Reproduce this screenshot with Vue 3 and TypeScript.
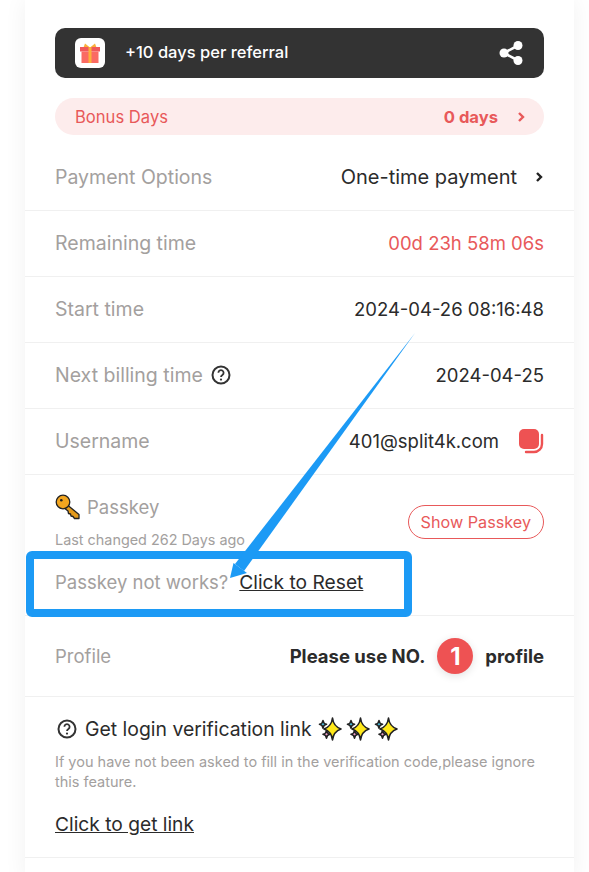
<template>
  <div class="page">
    <div class="card">
      <div class="referral">
        <span class="gift-box">
          <svg width="22" height="22" viewBox="0 0 22 22">
            <path d="M6 1.500 11 5.500 16 1.500 17.500 5.500H4.500Z" fill="#fbb03b" />
            <rect x="1" y="5" width="20" height="4.500" fill="#f0585a" />
            <rect x="2.500" y="9.500" width="17" height="11.500" fill="#fa6a63" />
            <rect x="9.500" y="5" width="3" height="16" fill="#fbb03b" />
          </svg>
        </span>
        <span class="referral-text">+10 days per referral</span>
        <svg class="share" width="26" height="26" viewBox="0 0 26 26" fill="#fff">
          <circle cx="20" cy="5.500" r="4.500" />
          <circle cx="6" cy="13" r="4.500" />
          <circle cx="20" cy="20.500" r="4.500" />
          <path d="M6 13 20 5.500M6 13l14 7.500" stroke="#fff" stroke-width="2.600" />
        </svg>
      </div>

      <div class="bonus">
        <span>Bonus Days</span>
        <span class="bonus-value">
          <b>0 days</b>
          <svg width="9" height="12" viewBox="0 0 9 12" fill="none" stroke="#e8595a" stroke-width="2.400">
            <path d="M2 2l4 4-4 4" />
          </svg>
        </span>
      </div>

      <div class="row row-first">
        <span class="label">Payment Options</span>
        <span class="value with-chevron">
          One-time payment
          <svg width="9" height="12" viewBox="0 0 9 12" fill="none" stroke="#222" stroke-width="2.400">
            <path d="M2 2l4 4-4 4" />
          </svg>
        </span>
      </div>
      <div class="row">
        <span class="label">Remaining time</span>
        <span class="value red">00d 23h 58m 06s</span>
      </div>
      <div class="row">
        <span class="label">Start time</span>
        <span class="value">2024-04-26 08:16:48</span>
      </div>
      <div class="row">
        <span class="label label-help">
          Next billing time
          <svg width="20" height="20" viewBox="0 0 20 20" fill="none" stroke="#333" stroke-width="2">
            <circle cx="10" cy="10" r="8.500" />
            <path d="M7.400 7.800a2.600 2.600 0 1 1 4 2.200c-.9.600-1.400 1-1.400 2" stroke-width="1.800" />
            <circle cx="10" cy="14.600" r="1.100" fill="#333" stroke="none" />
          </svg>
        </span>
        <span class="value">2024-04-25</span>
      </div>
      <div class="row">
        <span class="label">Username</span>
        <span class="value user">
          401@split4k.com
          <svg width="26" height="26" viewBox="0 0 26 26" fill="none">
            <rect x="1" y="1" width="20" height="20" rx="5" fill="#ee5253" />
            <path d="M24 7v9a8 8 0 0 1-8 8H8" stroke="#ee5253" stroke-width="2.400" stroke-linecap="round" />
          </svg>
        </span>
      </div>

      <div class="passkey">
        <div class="passkey-top">
          <div>
            <div class="passkey-title">
              <svg width="26" height="26" viewBox="0 0 26 26">
                <path d="M10 9 24 20.500V24.500H19.500L18 22.500 16 22 15.500 20 13.500 19.500 13 17 8 13Z" fill="#e39a1c" stroke="#222" stroke-width="1.300" stroke-linejoin="round" />
                <circle cx="8" cy="8" r="6.800" fill="#f2a51f" stroke="#222" stroke-width="1.300" />
                <circle cx="6.300" cy="6.300" r="1.300" fill="#222" />
              </svg>
              <span class="label small">Passkey</span>
            </div>
            <div class="hint">Last changed 262 Days ago</div>
          </div>
          <span class="show-btn">Show Passkey</span>
        </div>
        <div class="reset">
          <span class="label small">Passkey not works?</span>
          <a class="link">Click to Reset</a>
        </div>
      </div>

      <div class="row row-profile">
        <span class="label small">Profile</span>
        <span class="profile-value">
          Please use NO.
          <span class="badge">1</span>
          profile
        </span>
      </div>

      <div class="verify">
        <div class="verify-title">
          <svg width="20" height="20" viewBox="0 0 20 20" fill="none" stroke="#333" stroke-width="2">
            <circle cx="10" cy="10" r="8.500" />
            <path d="M7.400 7.800a2.600 2.600 0 1 1 4 2.200c-.9.600-1.400 1-1.400 2" stroke-width="1.800" />
            <circle cx="10" cy="14.600" r="1.100" fill="#333" stroke="none" />
          </svg>
          <span>Get login verification link</span>
          <span class="sparkles">
            <svg v-for="n in 3" :key="n" width="24" height="24" viewBox="0 0 24 24" stroke="#222" stroke-width="1.600" stroke-linejoin="round">
              <path d="M14.500 1c.7 6 2.800 9 8.500 11-5.700 2-7.800 5-8.500 11-.7-6-2.800-9-8.500-11 5.700-2 7.800-5 8.500-11Z" fill="#ffe81a" />
              <path d="M5 3.500c.3 2.300 1 3.200 3.500 3.800-2.500.6-3.200 1.500-3.500 3.800-.3-2.300-1-3.200-3.500-3.800 2.500-.6 3.200-1.500 3.500-3.800Z" fill="#4cc3e6" />
              <path d="M8.500 13.500c.3 2.300 1 3.200 3.500 3.800-2.500.6-3.200 1.500-3.500 3.800-.3-2.300-1-3.200-3.500-3.800 2.500-.6 3.200-1.500 3.500-3.800Z" fill="#ee9fc6" />
            </svg>
          </span>
        </div>
        <p class="verify-hint">If you have not been asked to fill in the verification code,please ignore this feature.</p>
        <a class="link">Click to get link</a>
      </div>
    </div>

    <!-- annotation drawn over the screenshot -->
    <div class="mark-box"></div>
    <svg class="mark-arrow" width="589" height="872" viewBox="0 0 589 872">
      <path d="M415 333 244 571 235 564Z" fill="#1c9af5" />
      <path d="M230 578 233.500 563 247 573Z" fill="#1c9af5" />
    </svg>
  </div>
</template>

<script setup lang="ts">
</script>

<style>
html, body { margin: 0; }
</style>

<style scoped>
.page {
  position: relative;
  width: 589px;
  height: 872px;
  overflow: hidden;
  background: #fff;
  font-family: "Inter", "Lato", sans-serif;
  color: #2b2b2b;
}
.card {
  box-sizing: border-box;
  width: 549px;
  height: 880px;
  margin-left: 25px;
  padding: 28px 30px 0;
  background: #fff;
  box-shadow: 0 0 22px rgba(0, 0, 0, 0.06);
}
.referral {
  display: flex;
  align-items: center;
  height: 50px;
  padding: 0 20px;
  border-radius: 10px;
  background: #333;
  color: #fff;
}
.gift-box {
  display: flex;
  align-items: center;
  justify-content: center;
  width: 30px;
  height: 30px;
  border-radius: 6px;
  background: #fff;
}
.referral-text {
  flex: 1;
  margin-left: 20px;
  padding-bottom: 2px;
  font-size: 16.500px;
  font-weight: 500;
}
.bonus {
  display: flex;
  align-items: center;
  justify-content: space-between;
  height: 37px;
  margin-top: 20px;
  padding: 0 18px 0 20px;
  border-radius: 19px;
  background: #fdecec;
  color: #e8595a;
  font-size: 16.600px;
}
.bonus-value {
  display: flex;
  align-items: center;
  gap: 19px;
}
.bonus-value b { font-weight: 700; }
.row {
  display: flex;
  align-items: center;
  justify-content: space-between;
  height: 65px;
  border-bottom: 1px solid #f0f0f0;
  margin: 0 -30px;
  padding: 0 30px;
}
.row-first { padding-top: 10px; }
.row-profile { height: 80px; }
.label {
  padding-bottom: 2px;
  color: #a3a09e;
  font-size: 19.500px;
}
.label.small {
  padding-bottom: 0;
  font-size: 18.500px;
}
.label-help {
  display: flex;
  align-items: center;
  gap: 8px;
}
.value {
  padding-bottom: 2px;
  font-size: 18.500px;
  color: #2b2b2b;
}
.red { color: #e8595a; }
.with-chevron {
  display: flex;
  align-items: center;
  gap: 18px;
  font-size: 20px;
}
.user {
  display: flex;
  align-items: center;
  gap: 19px;
}
.passkey {
  margin: 0 -30px;
  padding: 19px 30px 0;
  height: 121px;
  border-bottom: 1px solid #f0f0f0;
}
.passkey-top {
  display: flex;
  align-items: center;
  justify-content: space-between;
}
.passkey-title {
  display: flex;
  align-items: center;
  gap: 6px;
}
.hint {
  margin-top: 11px;
  color: #a3a09e;
  font-size: 14.400px;
  line-height: 18px;
}
.show-btn {
  padding: 6px 12px;
  border: 1px solid #e8595a;
  border-radius: 17px;
  color: #e8595a;
  font-size: 16.200px;
}
.reset {
  display: flex;
  align-items: center;
  gap: 11px;
  margin-top: 21px;
}
.link {
  color: #2b2b2b;
  font-size: 19.200px;
  text-decoration: underline;
}
.profile-value {
  display: flex;
  align-items: center;
  gap: 12px;
  font-size: 18.500px;
  font-weight: 700;
}
.badge {
  display: flex;
  align-items: center;
  justify-content: center;
  width: 36px;
  height: 36px;
  border-radius: 50%;
  background: #ee5253;
  color: #fff;
  font-size: 24px;
  box-shadow: 0 2px 8px rgba(0, 0, 0, 0.12);
}
.verify {
  margin: 0 -30px;
  padding: 20px 30px 0;
  height: 140px;
  border-bottom: 1px solid #f0f0f0;
}
.verify-title {
  display: flex;
  align-items: center;
  gap: 8px;
  padding-left: 2px;
  font-size: 19.400px;
}
.sparkles {
  display: flex;
  gap: 4px;
  margin-left: -2px;
}
.verify-hint {
  margin: 11px 0 20px;
  color: #a3a09e;
  font-size: 14.500px;
  line-height: 20px;
}
.mark-box {
  position: absolute;
  left: 26px;
  top: 551px;
  width: 386px;
  height: 66px;
  box-sizing: border-box;
  border: 8px solid #1c9af5;
  border-radius: 6px;
}
.mark-arrow {
  position: absolute;
  left: 0;
  top: 0;
}
</style>
